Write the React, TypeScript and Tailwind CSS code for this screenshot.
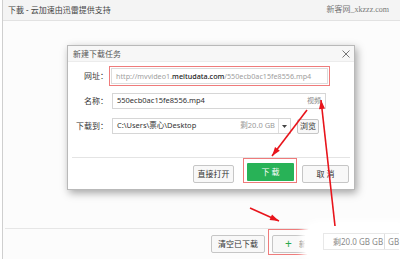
import type { ReactNode } from 'react';

const font = { fontFamily: '"Noto Sans", "Noto Sans CJK SC", sans-serif' };

function arrowHead(x1: number, y1: number, x2: number, y2: number, len = 9, half = 3) {
  const dx = x2 - x1;
  const dy = y2 - y1;
  const d = Math.hypot(dx, dy);
  const ux = dx / d;
  const uy = dy / d;
  const bx = x2 - ux * len;
  const by = y2 - uy * len;
  return `${x2},${y2} ${bx - uy * half},${by + ux * half} ${bx + uy * half},${by - ux * half}`;
}

function Arrow({ x1, y1, x2, y2 }: { x1: number; y1: number; x2: number; y2: number }) {
  return (
    <g>
      <line x1={x1} y1={y1} x2={x2} y2={y2} stroke="#e8141b" strokeWidth={1.6} />
      <polygon points={arrowHead(x1, y1, x2, y2)} fill="#e8141b" />
    </g>
  );
}

function Label({ children }: { children: ReactNode }) {
  return <div className="w-[41px] text-right text-[8px] leading-none text-[#333] pr-[1px]">{children}</div>;
}

function GrayButton({ children, className = '' }: { children: ReactNode; className?: string }) {
  return (
    <div
      className={`flex items-center justify-center border border-[#c6c6c6] bg-[#f8f8f8] rounded-[2px] text-[8px] text-[#333] ${className}`}
    >
      {children}
    </div>
  );
}

export default function App() {
  return (
    <div className="relative w-[400px] h-[259px] overflow-hidden bg-white pl-[2px]" style={font}>
      <div className="flex flex-col h-full border-l border-[#cfcfcf] bg-[#fcfcfc]">
        {/* 顶部标题栏 */}
        <div className="h-[21px] shrink-0 flex items-center justify-between px-[5px] bg-[#f4f4f4] border-b border-[#e2e2e2]">
          <span className="text-[8px] text-[#444]">下載 - 云加速由迅雷提供支持</span>
          <span className="text-[8px] text-[#777] pr-[6px]" style={{ fontFamily: '"Liberation Serif", "Noto Sans CJK SC", serif' }}>
            新客网_xkzzz.com
          </span>
        </div>

        {/* 主区域 + 弹窗 */}
        <div className="flex-1 pl-[64px] pt-[24px]">
          <div className="w-[288px] h-[145px] bg-white border border-[#b9b9b9] shadow-[2px_3px_8px_rgba(0,0,0,0.35)] flex flex-col">
            <div className="h-[16px] shrink-0 flex items-center justify-between pl-[5px] pr-[4px] bg-[#f7f7f7] border-b border-[#ececec]">
              <span className="text-[8px] text-[#555]">新建下载任务</span>
              <svg width="8" height="8" viewBox="0 0 8 8" className="mt-[1px]">
                <path d="M0.5 0.5 L7.5 7.5 M7.5 0.5 L0.5 7.5" stroke="#666" strokeWidth="0.9" />
              </svg>
            </div>

            <div className="flex flex-col pt-[4px]">
              {/* 网址 */}
              <div className="flex items-center">
                <Label>网址：</Label>
                <div className="border border-[#ef7b7b] p-[1px]">
                  <div className="w-[217px] h-[16px] border border-[#dcdcdc] flex items-center pl-[4px] text-[7.2px] text-[#a0a0a0] whitespace-nowrap overflow-hidden">
                    http://mvvideo1.<span className="text-[#222] font-medium">meitudata.com</span>/550ecb0ac15fe8556.mp4
                  </div>
                </div>
              </div>

              {/* 名称 */}
              <div className="flex items-center mt-[7px]">
                <Label>名称：</Label>
                <div className="ml-[3px] w-[214px] h-[16px] border border-[#d6d6d6] flex items-center justify-between pl-[4px] pr-[4px] text-[7.5px] text-[#333]">
                  <span>550ecb0ac15fe8556.mp4</span>
                  <span className="text-[7px] text-[#888]">视频</span>
                </div>
              </div>

              {/* 下载到 */}
              <div className="flex items-center mt-[9px]">
                <Label>下载到：</Label>
                <div className="ml-[3px] w-[179px] h-[16px] border border-[#d6d6d6] flex items-center text-[7.5px]">
                  <span className="flex-1 pl-[4px] text-[#333]">C:\Users\票心\Desktop</span>
                  <span className="pr-[3px] text-[#999]">剩20.0 GB</span>
                  <div className="w-[12px] h-full border-l border-[#dedede] flex items-center justify-center">
                    <svg width="5" height="3" viewBox="0 0 5 3">
                      <path d="M0 0 H5 L2.5 3 Z" fill="#444" />
                    </svg>
                  </div>
                </div>
                <GrayButton className="ml-[6px] w-[22px] h-[15px]">浏览</GrayButton>
              </div>

              <div className="mt-[23px] ml-[4px] mr-[4px] border-t border-[#e4e4e4]" />

              {/* 按钮 */}
              <div className="flex justify-end items-start pr-[5px]">
                <GrayButton className="mt-[7px] w-[41px] h-[18px]">直接打开</GrayButton>
                <div className="ml-[9px] border border-[#ef7b7b] pt-[4px] pl-[3px] pr-[2px] pb-[1px]">
                  <div className="w-[47px] h-[18px] bg-[#28b257] rounded-[1px] flex items-center justify-center text-[8px] text-white">
                    下 载
                  </div>
                </div>
                <GrayButton className="mt-[7px] ml-[5px] w-[47px] h-[18px]">取 消</GrayButton>
              </div>
            </div>
          </div>
        </div>

        {/* 底部栏 */}
        <div className="h-[31px] shrink-0 ml-[2px] border-t border-[#e6e6e6] flex items-start pl-[206px]">
          <GrayButton className="mt-[6px] w-[54px] h-[18px]">清空已下载</GrayButton>
          <div className="ml-[3px] border border-[#ef7b7b] pt-[5px] pl-[3px] pr-[3px] pb-[1px]">
            <GrayButton className="w-[60px] h-[18px] justify-start pl-[12px]">
              <span className="text-[12px] leading-none text-[#2aa84f] mr-[7px]">+</span>
              <span>新建</span>
            </GrayButton>
          </div>
        </div>
      </div>

      {/* 右下角残留截图 */}
      <div className="absolute right-0 bottom-0 w-[95px] h-[35px] bg-white rounded-tl-[14px] rounded-bl-[10px] shadow-[0_0_6px_4px_rgba(255,255,255,1)] flex items-center pl-[18px]">
        <div className="h-[17px] flex items-center border border-[#e8e8e8] border-r-0 text-[8px] text-[#8a8a8a]">
          <span className="pl-[9px] pr-[1px]">剩20.0 GB GB</span>
          <span className="h-full border-l border-[#dedede]" />
          <span className="pl-[3px]">GB</span>
        </div>
      </div>

      {/* 红色标注箭头 */}
      <svg className="absolute inset-0 pointer-events-none" width="400" height="259">
        <Arrow x1={335} y1={226} x2={321} y2={100} />
        <Arrow x1={307} y1={110} x2={272} y2={156} />
        <Arrow x1={250} y1={208} x2={279} y2={221} />
      </svg>
    </div>
  );
}
